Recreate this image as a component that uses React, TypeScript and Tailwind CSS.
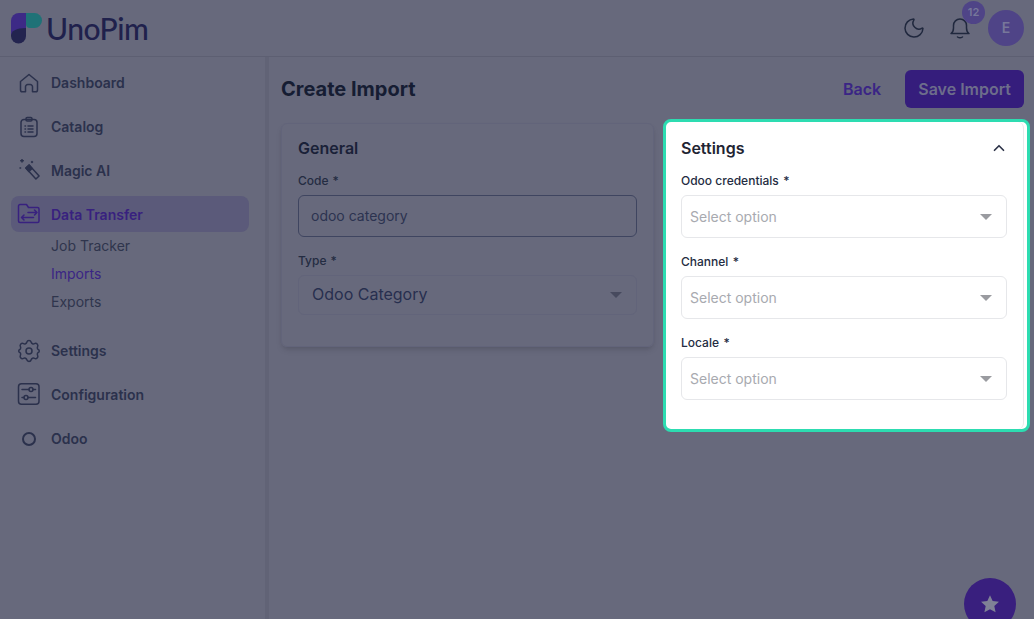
import React from "react";
import { ChevronUp, Moon } from "lucide-react";

const menuTop = [
  { label: "Dashboard", icon: <HomeIcon /> },
  { label: "Catalog", icon: <CatalogIcon /> },
  { label: "Magic AI", icon: <WandIcon /> },
];

const menuBottom = [
  { label: "Settings", icon: <GearIcon /> },
  { label: "Configuration", icon: <ConfigIcon /> },
  { label: "Odoo", icon: <CircleIcon /> },
];

function IconBase({ children, className = "" }: { children: React.ReactNode; className?: string }) {
  return (
    <svg viewBox="0 0 24 24" fill="none" stroke="currentColor" strokeWidth="1.5" strokeLinecap="round" strokeLinejoin="round" className={`w-6 h-6 ${className}`}>
      {children}
    </svg>
  );
}

function HomeIcon() {
  return (
    <IconBase>
      <path d="M3.500 10.500 12 3.500l8.500 7v8.500a1.800 1.800 0 0 1-1.800 1.800H15.500v-5a2.200 2.200 0 0 0-2.200-2.200h-2.600a2.200 2.200 0 0 0-2.200 2.200v5H5.300A1.800 1.800 0 0 1 3.500 19z" />
    </IconBase>
  );
}

function CatalogIcon() {
  return (
    <IconBase>
      <rect x="4" y="4.500" width="16" height="17" rx="3" />
      <rect x="9" y="2.500" width="6" height="3.500" rx="1.200" />
      <path d="M8 11h.5M11 11h5M8 14h.5M11 14h5M8 17h.5M11 17h5" />
    </IconBase>
  );
}

function WandIcon() {
  return (
    <IconBase>
      <path d="M12.100 6 22.100 17l-3.200 3L8.900 9z" />
      <path d="m12.100 6 3 3.400-3.200 3L8.900 9z" fill="currentColor" />
      <path d="M5 0.500v2.500M3.700 1.700h2.600M15 2.500v1M14.500 3h1M3 9h.6" />
    </IconBase>
  );
}

function TransferIcon() {
  return (
    <IconBase>
      <path d="M1.500 4A1.500 1.500 0 0 1 3 2.500h6.500l2 3h9A1.500 1.500 0 0 1 22 7v12a1.500 1.500 0 0 1-1.500 1.500H3A1.500 1.500 0 0 1 1.500 19z" />
      <path d="M11 10.500h9M20 10.500 17.500 8M20 10.500 17.500 13M4.500 15.500h12M4.500 15.500 7 13M4.500 15.500 7 18" />
    </IconBase>
  );
}

function GearIcon() {
  return (
    <IconBase>
      <path d="M9.800 3.200a2.300 2.300 0 0 1 4.400 0 2.300 2.300 0 0 0 3.300 1.400 2.300 2.300 0 0 1 3.100 3.100 2.300 2.300 0 0 0 1.400 3.300 2.300 2.300 0 0 1 0 2 2.300 2.300 0 0 0-1.400 3.300 2.300 2.300 0 0 1-3.100 3.100 2.300 2.300 0 0 0-3.300 1.400 2.300 2.300 0 0 1-4.400 0 2.300 2.300 0 0 0-3.300-1.400 2.300 2.300 0 0 1-3.100-3.100 2.300 2.300 0 0 0-1.400-3.300 2.300 2.300 0 0 1 0-2 2.300 2.300 0 0 0 1.400-3.300 2.300 2.300 0 0 1 3.100-3.100 2.300 2.300 0 0 0 3.300-1.400z" />
      <circle cx="12" cy="12" r="3" />
    </IconBase>
  );
}

function ConfigIcon() {
  return (
    <IconBase>
      <rect x="1.500" y="0.800" width="20.500" height="20.500" rx="3" />
      <path d="M5 6.500h7M16 6.500h2.500M5 14.500h2M11 14.500h7.500" />
      <circle cx="14" cy="6.500" r="2" />
      <circle cx="9" cy="14.500" r="2" />
    </IconBase>
  );
}

function CircleIcon() {
  return (
    <IconBase>
      <circle cx="12" cy="12" r="6" strokeWidth="2" />
    </IconBase>
  );
}

function BellIcon() {
  return (
    <IconBase className="text-[#20283e]">
      <path d="M3 17.500c1.500-1 2.500-2.500 2.500-5.500V9.500a6.500 6.500 0 0 1 13 0V12c0 3 1 4.500 2.500 5.500z" />
      <path d="M9.500 21c1.500 1 3.500 1 5 0" />
    </IconBase>
  );
}

function Logo() {
  return (
    <div className="flex items-center gap-[4px]">
      <svg viewBox="0 0 31 31" className="w-[31px] h-[31px] shrink-0">
        <path d="M0 23V8a8 8 0 0 1 8-8h7v23z" fill="#3d2a86" />
        <path d="M15 0h8.500a7.500 7.500 0 0 1 0 15H19a4 4 0 0 1-4-4z" fill="#1f7277" />
        <path d="M0 23C0 18 5 15 15 15V23a7.500 7.500 0 0 1-15 0z" fill="#23244f" />
      </svg>
      <span className="font-['Lato',sans-serif] text-[30px] leading-none tracking-[-0.5px] font-medium text-[#20214c]">UnoPim</span>
    </div>
  );
}

function Field({ label, wide = false, children }: { label: string; wide?: boolean; children: React.ReactNode }) {
  return (
    <div>
      <div className="h-[15px] leading-[15px] text-xs font-medium text-[#242c42] mb-[7px]">
        {label}
        <span className={wide ? "ml-[4.5px]" : "ml-1"}>*</span>
      </div>
      {children}
    </div>
  );
}

function Caret({ className }: { className: string }) {
  return <span className={`w-0 h-0 border-x-[6px] border-x-transparent border-t-[6px] ${className}`} />;
}

function SelectBox() {
  return (
    <div className="h-[43px] flex items-center justify-between pl-[8px] pr-[14px] bg-white border border-[#e6e7ea] rounded-md text-sm text-[#a8aab0]">
      Select option
      <Caret className="border-t-[#9a9ba0]" />
    </div>
  );
}

export default function App() {
  return (
    <div className="w-[1034px] h-[619px] overflow-hidden relative bg-[#67697c] font-['Inter',sans-serif] text-[#2c3249]">
      <header className="h-[57px] flex items-center justify-between border-b border-[#5d5f72] pl-[11px] pr-[10px]">
        <Logo />
        <div className="flex items-center">
          <Moon className="w-6 h-6 text-[#20283e]" strokeWidth={1.5} />
          <div className="relative ml-[22px] mr-[16px]">
            <BellIcon />
            <span className="absolute -top-[15px] left-[14px] w-[23px] h-[23px] rounded-full bg-[#4f4487] text-[#77779a] text-[11px] font-semibold flex items-center justify-center">12</span>
          </div>
          <div className="w-9 h-9 rounded-full bg-[#4f4487] text-[#77779a] text-sm font-semibold flex items-center justify-center">E</div>
        </div>
      </header>

      <div className="flex h-[562px]">
        <aside className="w-[269px] shrink-0 pt-[8px] pl-[11px] pr-[16px] border-r-[4px] border-[#616376]">
          <nav className="flex flex-col gap-2">
            {menuTop.map((item) => (
              <div key={item.label} className="h-9 flex items-center gap-[10px] px-[6px] rounded-lg text-sm font-semibold text-[#2b314c]">
                <span className="w-6 h-6 shrink-0">{item.icon}</span>
                {item.label}
              </div>
            ))}
            <div className="h-9 -mt-[1px] flex items-center gap-[10px] px-[6px] rounded-lg text-sm font-semibold bg-[#5b5a7a] text-[#38217f]">
              <span className="w-6 h-6 shrink-0"><TransferIcon /></span>
              <span className="pt-[1px]">Data Transfer</span>
            </div>
          </nav>
          <div className="flex flex-col pl-[40px] text-sm">
            <div className="h-7 flex items-center text-[#2f354d]">Job Tracker</div>
            <div className="h-7 flex items-center text-[#3a2585]">Imports</div>
            <div className="h-7 flex items-center text-[#2f354d]">Exports</div>
          </div>
          <nav className="flex flex-col gap-2 mt-[17px]">
            {menuBottom.map((item) => (
              <div key={item.label} className="h-9 flex items-center gap-[10px] px-[6px] rounded-lg text-sm font-semibold text-[#2b314c]">
                <span className="w-6 h-6 shrink-0">{item.icon}</span>
                {item.label}
              </div>
            ))}
          </nav>
        </aside>

        <main className="flex-1 pl-[12px] pr-[4px] pt-[13px]">
          <div className="flex items-center justify-between h-[38px] pr-[6px]">
            <h1 className="text-xl font-bold text-[#161d33]">Create Import</h1>
            <div className="flex items-center gap-6">
              <span className="font-semibold text-[#3a2585]">Back</span>
              <button className="h-[38px] px-[13px] rounded-md bg-[#351d7c] text-[#6d6d8b] font-semibold">Save Import</button>
            </div>
          </div>

          <div className="flex items-start mt-[15px] gap-[9px]">
            <section className="w-[373px] h-[224px] rounded-md border border-[#62647a] shadow-md px-4 pt-[14px]">
              <h2 className="text-base font-semibold leading-5 text-[#1a2138] mb-[15px]">General</h2>
              <Field label="Code">
                <div className="h-[42px] px-3 flex items-center border border-[#3f4560] rounded-md text-sm text-[#2c3350]">odoo category</div>
              </Field>
              <div className="mt-[16px]">
                <Field label="Type">
                  <div className="h-10 flex items-center justify-between pl-[13px] pr-[14px] pb-[3px] border border-[#62647a] rounded-md text-base text-[#272f4f]">
                    Odoo Category
                    <Caret className="border-t-[#474a5e] mt-[3px]" />
                  </div>
                </Field>
              </div>
            </section>

            <section className="w-[367px] h-[313px] -mt-[4px] rounded-lg border-[3px] border-[#2ddcb1] bg-white">
              <div className="w-[358px] h-[307px] border-r border-[#e8e9ec] rounded-md pl-[15px] pr-[16px] pt-[16px]">
                <div className="flex items-center justify-between mb-[15px]">
                  <h2 className="text-base font-semibold leading-5 text-[#1f2433]">Settings</h2>
                  <ChevronUp className="w-[18px] h-[18px] text-[#2d3348] -mr-[1px]" strokeWidth={2.25} />
                </div>
                <div className="flex flex-col gap-[16px]">
                  <Field label="Odoo credentials" wide><SelectBox /></Field>
                  <Field label="Channel" wide><SelectBox /></Field>
                  <Field label="Locale" wide><SelectBox /></Field>
                </div>
              </div>
            </section>
          </div>
        </main>
      </div>

      <button className="absolute left-[964px] top-[578px] w-[52px] h-[52px] rounded-full bg-[#391f7e] flex items-center justify-center">
        <svg viewBox="0 0 24 24" className="w-[22px] h-[22px]">
          <path d="m12 2.500 2.900 6.300 6.900.8-5.100 4.700 1.400 6.800-6.100-3.400-6.100 3.400 1.400-6.800L2.200 9.600l6.900-.8z" fill="#7f8196" />
        </svg>
      </button>
    </div>
  );
}
